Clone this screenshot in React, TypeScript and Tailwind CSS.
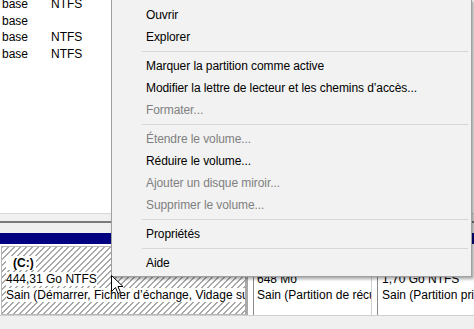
import React from "react";

type Item = { label: string; disabled?: boolean } | "sep";

const menu: Item[] = [
  { label: "Ouvrir" },
  { label: "Explorer" },
  "sep",
  { label: "Marquer la partition comme active" },
  { label: "Modifier la lettre de lecteur et les chemins d’accès..." },
  { label: "Formater...", disabled: true },
  "sep",
  { label: "Étendre le volume...", disabled: true },
  { label: "Réduire le volume..." },
  { label: "Ajouter un disque miroir...", disabled: true },
  { label: "Supprimer le volume...", disabled: true },
  "sep",
  { label: "Propriétés" },
  "sep",
  { label: "Aide" },
];

const rows = [
  ["base", "NTFS"],
  ["base", ""],
  ["base", "NTFS"],
  ["base", "NTFS"],
];

function ContextMenu() {
  return (
    <div className="absolute left-[111px] top-[-1px] w-[361px] border border-[#a0a0a0] bg-[#f2f2f2] pt-[4px] pb-[2px] tracking-[-0.08px] shadow-[2px_2px_3px_rgba(0,0,0,0.35)]">
      {menu.map((item, i) =>
        item === "sep" ? (
          <div key={i} className="h-[7px] flex items-center pl-[30px] pr-[3px]">
            <div className="h-px w-full bg-[#d7d7d7]" />
          </div>
        ) : (
          <div
            key={i}
            className={`h-[22px] leading-[22px] pl-[34px] whitespace-nowrap ${
              item.disabled ? "text-[#808080]" : "text-black"
            }`}
          >
            {item.label}
          </div>
        )
      )}
    </div>
  );
}

function Cursor() {
  return (
    <svg className="absolute left-[111px] top-[275px]" width="13" height="20" viewBox="0 0 13 20">
      <path
        d="M0.5 0.5 L0.5 16.5 L4.5 12.5 L7 18.5 L9.5 17.5 L7 11.5 L12 11.5 Z"
        fill="#fff"
        stroke="#000"
        strokeWidth="1"
      />
    </svg>
  );
}

export default function App() {
  return (
    <div className="relative w-[474px] h-[329px] overflow-hidden bg-[#f0f0f0] text-[12px] text-black font-['Liberation_Sans',Arial,sans-serif]">
      {/* liste des volumes */}
      <div className="h-[218px] border-b border-[#d9d9d9] bg-white">
        <div className="-mt-[4px] flex flex-col">
          {rows.map(([a, b], i) => (
            <div key={i} className="flex h-[16.5px] leading-[16.5px]">
              <span className="w-[51px] pl-[2px]">{a}</span>
              <span>{b}</span>
            </div>
          ))}
        </div>
      </div>

      {/* séparateur */}
      <div className="h-[7px] bg-[#f0f0f0]" />
      <div className="h-[2px] bg-[#7a7a7a]" />

      {/* vue graphique du disque */}
      <div className="bg-[#f0f0f0] pt-[10px]">
        <div className="h-[11px] bg-[#000080]" />
        <div className="flex h-[72px] bg-white pt-[2px] border-b border-[#d0d0d0]">
          <div className="w-[247px] ml-[1px] border border-[#b8b8b8] border-r-[3px] border-r-[#a8a8a8] bg-[repeating-linear-gradient(135deg,#a8a8a8_0_1px,#fff_1px_4.24px)] overflow-hidden whitespace-nowrap pt-[8px] pl-[4px]">
            <div className="h-[16px] leading-[16px]">
              <span className="bg-white font-bold pl-[7px] pr-[2px]">(C:)</span>
            </div>
            <div className="h-[16px] leading-[16px]">
              <span className="bg-white">444,31 Go NTFS</span>
            </div>
            <div className="h-[16px] leading-[16px]">
              <span className="bg-white">Sain (Démarrer, Fichier d’échange, Vidage sur incident, Partition de données de base)</span>
            </div>
          </div>
          <div className="w-[5px]" />
          <div className="w-[119px] border-l border-[#8a8a8a] border-r border-r-[#d0d0d0] overflow-hidden whitespace-nowrap pt-[9px] pl-[3px]">
            <div className="h-[16px]" />
            <div className="h-[16px] leading-[16px]">648 Mo</div>
            <div className="h-[16px] leading-[16px]">Sain (Partition de récupération)</div>
          </div>
          <div className="w-[5px]" />
          <div className="flex-1 border-l border-[#8a8a8a] overflow-hidden whitespace-nowrap pt-[9px] pl-[4px]">
            <div className="h-[16px]" />
            <div className="h-[16px] leading-[16px]">1,70 Go NTFS</div>
            <div className="h-[16px] leading-[16px]">Sain (Partition principale)</div>
          </div>
        </div>
      </div>

      <ContextMenu />
      <Cursor />
    </div>
  );
}
